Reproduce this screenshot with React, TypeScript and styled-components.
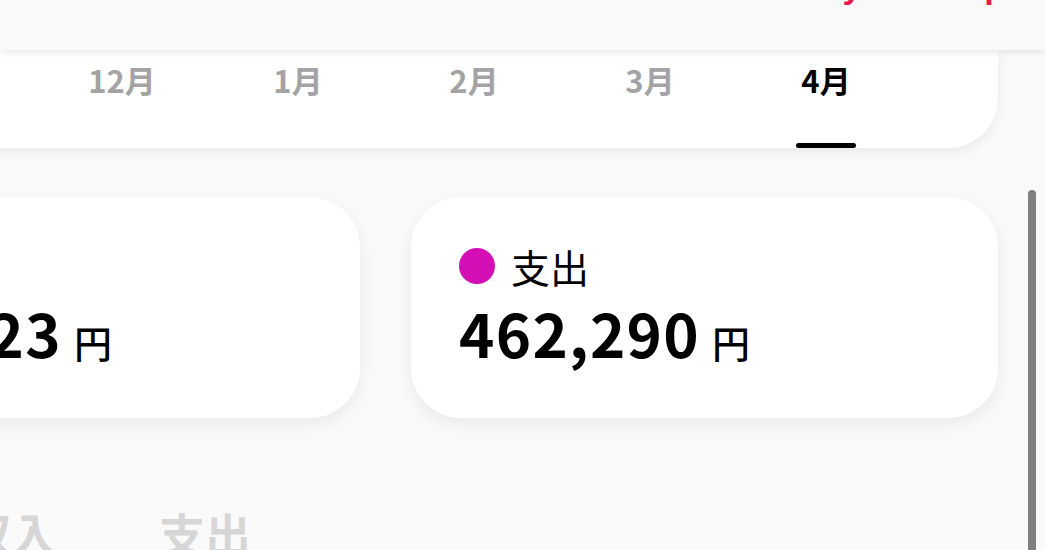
import React from "react";
import styled, { createGlobalStyle } from "styled-components";

const GlobalStyle = createGlobalStyle`
  html, body {
    margin: 0;
    padding: 0;
    width: 1045px;
    height: 550px;
    overflow: hidden;
    background: #fafafa;
    font-family: "Noto Sans CJK JP", "Noto Sans", sans-serif;
  }
`;

const months = ["11月", "12月", "1月", "2月", "3月", "4月"];

export default function App() {
  return (
    <>
      <GlobalStyle />
      <Page>
        <Header>
          <HeaderLinks>
            <span>Today</span>
            <span>Help</span>
          </HeaderLinks>
        </Header>
        <Content>
          <MonthBar>
            {months.map((m) => (
              <MonthTab key={m} $active={m === "4月"}>
                <span>{m}</span>
                <Underline $active={m === "4月"} />
              </MonthTab>
            ))}
          </MonthBar>
          <Summary>
            <SummaryCard>
              <Label>
                <Dot $color="#1aa6e0" />
                収入
              </Label>
              <Amount>
                512,423<Yen>円</Yen>
              </Amount>
            </SummaryCard>
            <SummaryCard>
              <Label>
                <Dot $color="#d40fb5" />
                支出
              </Label>
              <Amount>
                462,290<Yen>円</Yen>
              </Amount>
            </SummaryCard>
          </Summary>
          <TypeTabs>
            <TypeTab>収入</TypeTab>
            <TypeTab>支出</TypeTab>
          </TypeTabs>
        </Content>
        <ScrollThumb />
      </Page>
    </>
  );
}

const Page = styled.div`
  position: relative;
  width: 1045px;
  height: 550px;
  overflow: hidden;
`;

const Header = styled.header`
  position: relative;
  z-index: 2;
  height: 50px;
  background: #f9f9f9;
  box-shadow: 0 2px 8px rgba(0, 0, 0, 0.1);
  display: flex;
  justify-content: flex-end;
  padding-right: 40px;
`;

const HeaderLinks = styled.div`
  display: flex;
  gap: 70px;
  margin-top: -32px;
  height: 36px;
  font-family: "Liberation Sans", Arial, sans-serif;
  font-size: 34px;
  line-height: 36px;
  font-weight: 700;
  color: #e8174f;
`;

const Content = styled.main`
  width: 1225px;
  margin-left: -227px;
`;

const MonthBar = styled.nav`
  height: 98px;
  background: #fff;
  border-bottom-right-radius: 50px;
  box-shadow: 0 4px 14px rgba(0, 0, 0, 0.07);
  display: flex;
  padding-left: 85px;
`;

const MonthTab = styled.div<{ $active: boolean }>`
  width: 176px;
  display: flex;
  flex-direction: column;
  align-items: center;
  justify-content: space-between;
  padding-top: 8px;
  font-size: 31px;
  line-height: 44px;
  font-weight: 700;
  color: ${(p) => (p.$active ? "#000" : "#a3a3a3")};
`;

const Underline = styled.div<{ $active: boolean }>`
  width: 60px;
  height: 5px;
  border-radius: 3px;
  background: ${(p) => (p.$active ? "#000" : "transparent")};
`;

const Summary = styled.section`
  display: grid;
  grid-template-columns: 1fr 1fr;
  gap: 51px;
  margin-top: 49px;
`;

const SummaryCard = styled.div`
  height: 221px;
  box-sizing: border-box;
  background: #fff;
  border-radius: 50px;
  box-shadow: 0 6px 18px rgba(0, 0, 0, 0.07);
  padding: 44px 48px 0;
`;

const Label = styled.div`
  display: flex;
  align-items: center;
  gap: 16px;
  font-size: 39px;
  line-height: 50px;
  color: #000;
`;

const Dot = styled.span<{ $color: string }>`
  width: 36px;
  height: 36px;
  border-radius: 50%;
  background: ${(p) => p.$color};
`;

const Amount = styled.div`
  margin-top: 6px;
  font-size: 60px;
  line-height: 70px;
  font-weight: 700;
  color: #000;
  letter-spacing: 1.3px;
`;

const Yen = styled.span`
  font-size: 38px;
  font-weight: 500;
  margin-left: 12px;
  letter-spacing: 0;
`;

const TypeTabs = styled.div`
  display: flex;
  gap: 102px;
  padding-left: 192px;
  margin-top: 84px;
`;

const TypeTab = styled.div`
  font-size: 46px;
  line-height: 60px;
  font-weight: 700;
  color: #d6d6d6;
`;

const ScrollThumb = styled.div`
  position: absolute;
  left: 1028px;
  top: 190px;
  width: 8px;
  height: 400px;
  border-radius: 4px;
  background: #808080;
`;
